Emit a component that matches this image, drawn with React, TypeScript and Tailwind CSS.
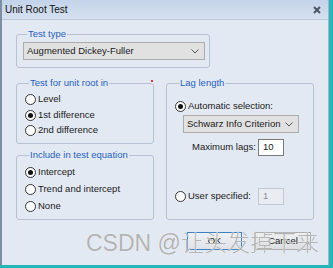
import React from "react";

const font = { fontFamily: '"Liberation Sans", Arial, sans-serif' };

const Radio = ({ checked, label }: { checked?: boolean; label: string }) => (
  <label className="flex items-center gap-[2px]">
    <span className="flex h-[11px] w-[11px] items-center justify-center rounded-full border border-[#333] bg-white">
      {checked && <span className="h-[5px] w-[5px] rounded-full bg-[#111]" />}
    </span>
    <span>{label}</span>
  </label>
);

const Chevron = () => (
  <svg width="8" height="5" viewBox="0 0 8 5" className="shrink-0">
    <polyline points="0.5,0.5 4,4 7.5,0.5" fill="none" stroke="#555" strokeWidth="1" />
  </svg>
);

const Select = ({ value, className }: { value: string; className: string }) => (
  <div
    className={`flex h-[18px] items-center justify-between border border-[#acacac] bg-[#e1e1e1] pl-[3px] pr-[5px] ${className}`}
  >
    <span>{value}</span>
    <Chevron />
  </div>
);

const Legend = ({ children }: { children: React.ReactNode }) => (
  <legend className="ml-[4px] px-[1px] leading-[12px] text-[#1f5fbf]">{children}</legend>
);

export default function App() {
  return (
    <div
      className="relative flex h-[268px] w-[333px] flex-col overflow-hidden bg-[#e3e9f3] text-[9.5px] text-[#1a1a1a]"
      style={font}
    >
      <div className="flex flex-1">
        <div className="w-[2px] bg-[#7d8ea4]" />

        <div className="flex flex-1 flex-col">
          {/* title bar */}
          <div className="flex h-[20px] items-center justify-between border-b border-[#b8c7db] bg-gradient-to-b from-[#c3d3e9] to-[#d5e1f0] pl-[3px] pr-[7px]">
            <span className="text-[10px] text-[#111]">Unit Root Test</span>
            <svg width="8" height="8" viewBox="0 0 8 8">
              <path d="M1 1L7 7M7 1L1 7" stroke="#4b5563" strokeWidth="2" />
            </svg>
          </div>

          <div className="flex flex-col pl-[14px] pt-[8px]">
            <fieldset className="w-[194px] rounded-[3px] border border-[#b6c2d3] pb-[7px] pl-[6px] pr-[4px] pt-[2px]">
              <Legend>Test type</Legend>
              <Select value="Augmented Dickey-Fuller" className="w-[182px]" />
            </fieldset>

            <div className="mt-[9px] flex gap-[12px]">
              <div className="flex w-[138px] flex-col gap-[5px]">
                <fieldset className="relative rounded-[3px] border border-[#b6c2d3] pb-[5px] pl-[8px] pt-[3px]">
                  <Legend>Test for unit root in</Legend>
                  <span className="absolute right-[0px] top-[-9px] h-[2px] w-[2px] rounded-full bg-[#e00000]" />
                  <div className="flex h-[15px] items-center">
                    <Radio label="Level" />
                  </div>
                  <div className="flex h-[16px] items-center">
                    <Radio checked label="1st difference" />
                  </div>
                  <div className="flex h-[15px] items-center">
                    <Radio label="2nd difference" />
                  </div>
                </fieldset>

                <fieldset className="rounded-[3px] border border-[#b6c2d3] pb-[5px] pl-[8px] pt-[3px]">
                  <Legend>Include in test equation</Legend>
                  <div className="flex flex-col gap-[1px]">
                    <div className="flex h-[16px] items-center">
                      <Radio checked label="Intercept" />
                    </div>
                    <div className="flex h-[16px] items-center">
                      <Radio label="Trend and intercept" />
                    </div>
                    <div className="flex h-[16px] items-center">
                      <Radio label="None" />
                    </div>
                  </div>
                </fieldset>
              </div>

              <fieldset className="flex w-[148px] flex-col rounded-[3px] border border-[#b6c2d3] pb-[14px] pl-[8px] pt-[10px]">
                <Legend>Lag length</Legend>
                <div className="flex h-[14px] items-center">
                  <Radio checked label="Automatic selection:" />
                </div>
                <Select value="Schwarz Info Criterion" className="ml-[8px] mt-[2px] w-[116px]" />
                <div className="ml-[17px] mt-[6px] flex items-center">
                  <span className="w-[66px]">Maximum lags:</span>
                  <div className="flex h-[17px] w-[26px] items-center border border-[#7a7a7a] bg-white pl-[4px]">
                    10
                  </div>
                </div>
                <div className="mt-auto flex items-center">
                  <div className="w-[83px]">
                    <Radio label="User specified:" />
                  </div>
                  <div className="flex h-[17px] w-[26px] items-center border border-[#c3c8d0] bg-[#e9edf3] pl-[4px] text-[#8a8a8a]">
                    1
                  </div>
                </div>
              </fieldset>
            </div>

            <div className="mt-[12px] flex justify-end gap-[13px] pr-[17px]">
              <button className="flex h-[18px] w-[55px] items-center justify-center border border-[#3c7fc4] bg-gradient-to-b from-[#eef1f5] to-[#dfe3e9]">
                OK
              </button>
              <button className="flex h-[18px] w-[56px] items-center justify-center border border-[#adadad] bg-gradient-to-b from-[#eef0f2] to-[#dcdee1]">
                Cancel
              </button>
            </div>
          </div>
        </div>

        <div className="w-[1px] bg-[#9fb3c8]" />
        <div className="w-[4px] bg-[#28b5b8]" />
      </div>
      <div className="h-[3px] bg-[#28b5b8]" />

      {/* watermark overlay */}
      <div
        className="pointer-events-none absolute left-[86px] top-[229px] whitespace-nowrap text-[23px] font-light leading-[28px] text-[#b3b3b3]"
        style={{ fontFamily: '"Liberation Sans", "Noto Sans CJK SC", sans-serif', textShadow: "0 0 1px #fff" }}
      >
        CSDN @让头发掉下来
      </div>
    </div>
  );
}
